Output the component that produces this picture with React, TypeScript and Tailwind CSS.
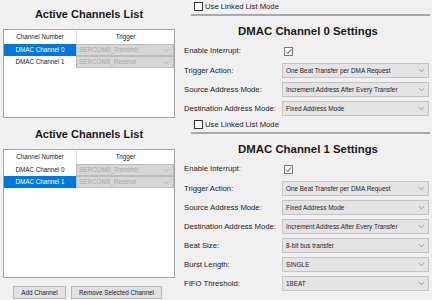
import React from 'react';

const Chevron: React.FC<{ color?: string }> = ({ color = '#8c8c8c' }) => (
  <svg width="7" height="5" viewBox="0 0 7 5">
    <path d="M1 1.2 L3.5 3.8 L6 1.2" fill="none" stroke={color} strokeWidth="0.8" />
  </svg>
);

const Combo: React.FC<{ value: string }> = ({ value }) => (
  <div className="flex h-[15px] items-center justify-between border border-[#c4c4c4] bg-[#e4e4e4] pl-[3px] pr-[3px] text-[6.4px] text-[#1e1e1e]">
    <span>{value}</span>
    <Chevron />
  </div>
);

const CheckBox: React.FC<{ checked?: boolean }> = ({ checked }) => (
  <div className={`flex h-[9px] w-[9px] items-center justify-center border bg-white ${checked ? 'border-[#7a7a7a]' : 'border-[#333]'}`}>
    {checked && (
      <svg width="7" height="7" viewBox="0 0 7 7">
        <path d="M1 3.6 L2.8 5.4 L6 1.4" fill="none" stroke="#333" strokeWidth="0.9" />
      </svg>
    )}
  </div>
);

// checkbox row with an etched rule below it
const LinkedList: React.FC = () => (
  <div className="ml-[7px] mr-[2px] flex h-[16px] shrink-0 items-center gap-[2px] border-b-2 border-[#a9a9a9] pb-[1px] pl-[3px] text-[7.7px] text-[#1a1a1a]">
    <CheckBox />
    <span>Use Linked List Mode</span>
  </div>
);

const Row: React.FC<{ label: string; first?: boolean; children: React.ReactNode }> = ({ label, first, children }) => (
  <div className={`grid grid-cols-[98px_147px] items-center ${first ? 'h-[20px]' : 'h-[19px]'}`}>
    <span className="text-[7.7px] text-[#1a1a1a]">{label}</span>
    {children}
  </div>
);

const ChannelTable: React.FC<{ selected: number; height: string }> = ({ selected, height }) => {
  const rows = [
    { name: 'DMAC Channel 0', trigger: 'SERCOM0_Transmit' },
    { name: 'DMAC Channel 1', trigger: 'SERCOM0_Receive' },
  ];
  return (
    <div className={`border border-[#a3a3a3] bg-white ${height}`}>
      <div className="grid h-[14px] grid-cols-[72px_1fr] items-center text-[6.3px] text-[#1a1a1a]">
        <span className="text-center">Channel Number</span>
        <span className="flex h-full items-center justify-center border-l border-[#e2e2e2]">Trigger</span>
      </div>
      {rows.map((r, i) => (
        <div key={r.name} className="grid h-[12px] grid-cols-[72px_1fr] text-[6.3px]">
          <span className={`flex items-center justify-center ${i === selected ? 'bg-[#0078d7] text-white' : 'text-[#1a1a1a]'}`}>{r.name}</span>
          <div className="flex items-center justify-between border border-[#bcbcbc] bg-[#d6d6d6] pl-[2px] pr-[3px] text-[#a9a9a9]">
            <span>{r.trigger}</span>
            <Chevron color="#a8a8a8" />
          </div>
        </div>
      ))}
    </div>
  );
};

const Title: React.FC<{ text: string }> = ({ text }) => (
  <div className="h-[14px] text-center text-[11px] font-bold leading-[14px] text-[#1a1a1a]">{text}</div>
);

export default function App() {
  return (
    <div className="flex h-[300px] w-[432px] overflow-hidden bg-[#f0f0f0] font-['Liberation_Sans',Arial,sans-serif]">
      {/* channel lists */}
      <div className="flex w-[178px] flex-col px-[3px] pt-[7px]">
        <Title text="Active Channels List" />
        <div className="mt-[8px]">
          <ChannelTable selected={0} height="h-[89px]" />
        </div>
        <div className="mt-[9px]">
          <Title text="Active Channels List" />
        </div>
        <div className="mt-[8px]">
          <ChannelTable selected={1} height="h-[129px]" />
        </div>
        <div className="mt-[8px] flex gap-[5px] pl-[10px]">
          <button className="h-[13px] w-[53px] border border-[#b9b9b9] bg-[#e1e1e1] text-[6.3px] text-[#1a1a1a]">Add Channel</button>
          <button className="h-[13px] w-[91px] border border-[#b9b9b9] bg-[#e1e1e1] text-[6.3px] text-[#1a1a1a]">Remove Selected Channel</button>
        </div>
      </div>

      {/* channel settings */}
      <div className="flex flex-1 flex-col pl-[6px]">
        <LinkedList />
        <div className="mt-[8px] text-center text-[11.4px] font-bold leading-[14px] text-[#1a1a1a]">DMAC Channel 0 Settings</div>
        <div className="mt-[3px]">
          <Row label="Enable Interrupt:" first>
            <div className="pl-[2px]"><CheckBox checked /></div>
          </Row>
          <Row label="Trigger Action:"><Combo value="One Beat Transfer per DMA Request" /></Row>
          <Row label="Source Address Mode:"><Combo value="Increment Address After Every Transfer" /></Row>
          <Row label="Destination Address Mode:"><Combo value="Fixed Address Mode" /></Row>
        </div>
        <LinkedList />
        <div className="mt-[8px] text-center text-[11.4px] font-bold leading-[14px] text-[#1a1a1a]">DMAC Channel 1 Settings</div>
        <div className="mt-[3px]">
          <Row label="Enable Interrupt:" first>
            <div className="pl-[2px]"><CheckBox checked /></div>
          </Row>
          <Row label="Trigger Action:"><Combo value="One Beat Transfer per DMA Request" /></Row>
          <Row label="Source Address Mode:"><Combo value="Fixed Address Mode" /></Row>
          <Row label="Destination Address Mode:"><Combo value="Increment Address After Every Transfer" /></Row>
          <Row label="Beat Size:"><Combo value="8-bit bus transfer" /></Row>
          <Row label="Burst Length:"><Combo value="SINGLE" /></Row>
          <Row label="FIFO Threshold:"><Combo value="1BEAT" /></Row>
        </div>
      </div>
    </div>
  );
}
